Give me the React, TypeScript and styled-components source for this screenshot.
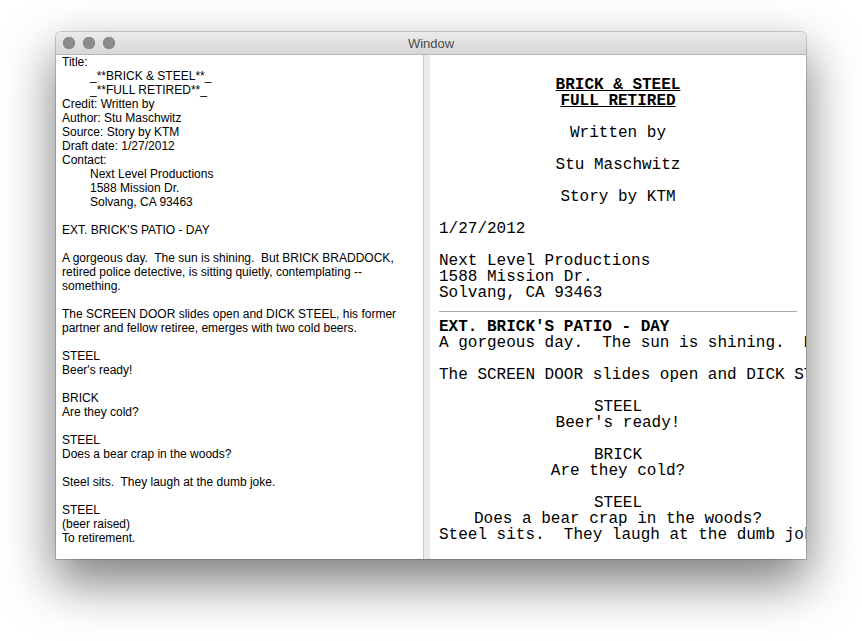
import React from "react";
import styled, { createGlobalStyle } from "styled-components";

const Global = createGlobalStyle`
  html, body { margin: 0; padding: 0; background: #ffffff; }
  body { width: 862px; height: 641px; overflow: hidden; }
`;

const Window = styled.div`
  margin: 32px 0 0 56px;
  width: 750px;
  height: 527px;
  border-radius: 5px 5px 0 0;
  background: #ffffff;
  box-shadow: 0 22px 50px 2px rgba(0, 0, 0, 0.5), 0 0 0 1px rgba(0, 0, 0, 0.18);
  display: flex;
  flex-direction: column;
  overflow: hidden;
`;

const TitleBar = styled.div`
  position: relative;
  height: 22px;
  flex: none;
  display: flex;
  align-items: center;
  justify-content: center;
  background: linear-gradient(#ebebeb, #d6d6d6);
  border-bottom: 1px solid #b6b6b6;
`;

const Lights = styled.div`
  position: absolute;
  left: 7px;
  top: 5px;
  display: flex;
  gap: 8px;
`;

const Light = styled.span`
  width: 12px;
  height: 12px;
  border-radius: 50%;
  background: #8c8c8c;
  box-shadow: inset 0 0 0 0.5px #7a7a7a;
`;

const Title = styled.div`
  font-family: "Liberation Sans", Arial, sans-serif;
  font-size: 13px;
  color: #4c4c4c;
`;

const Body = styled.div`
  flex: 1;
  display: flex;
  min-height: 0;
`;

const SourcePane = styled.div`
  width: 367px;
  flex: none;
  padding: 0 0 0 6px;
  box-sizing: border-box;
  overflow: hidden;
  font-family: "Liberation Sans", Arial, sans-serif;
  font-size: 12px;
  line-height: 14px;
  color: #000;
`;

const SrcLine = styled.div<{ $indent?: boolean }>`
  white-space: pre;
  height: 14px;
  padding-left: ${(p) => (p.$indent ? "28px" : "0")};
`;

const Divider = styled.div`
  width: 6px;
  flex: none;
  background: #ebebeb;
  border-left: 1px solid #c9c9c9;
`;

const PreviewPane = styled.div`
  flex: 1;
  min-width: 0;
  padding: 22px 9px 0 9px;
  overflow: hidden;
  font-family: "Liberation Mono", "Courier New", monospace;
  font-size: 16px;
  line-height: 16px;
  color: #000;
`;

const ScriptLine = styled.div<{ $center?: boolean; $bold?: boolean; $under?: boolean }>`
  white-space: pre;
  height: 16px;
  text-align: ${(p) => (p.$center ? "center" : "left")};
  font-weight: ${(p) => (p.$bold ? "bold" : "normal")};
  text-decoration: ${(p) => (p.$under ? "underline" : "none")};
`;

const Rule = styled.hr`
  border: none;
  border-top: 1px solid #a9a9a9;
  margin: 10px 0 7px 0;
  height: 0;
`;

type Src = { t: string; i?: boolean };
const source: Src[] = [
  { t: "Title:" },
  { t: "_**BRICK & STEEL**_", i: true },
  { t: "_**FULL RETIRED**_", i: true },
  { t: "Credit: Written by" },
  { t: "Author: Stu Maschwitz" },
  { t: "Source: Story by KTM" },
  { t: "Draft date: 1/27/2012" },
  { t: "Contact:" },
  { t: "Next Level Productions", i: true },
  { t: "1588 Mission Dr.", i: true },
  { t: "Solvang, CA 93463", i: true },
  { t: "" },
  { t: "EXT. BRICK'S PATIO - DAY" },
  { t: "" },
  { t: "A gorgeous day.  The sun is shining.  But BRICK BRADDOCK," },
  { t: "retired police detective, is sitting quietly, contemplating --" },
  { t: "something." },
  { t: "" },
  { t: "The SCREEN DOOR slides open and DICK STEEL, his former" },
  { t: "partner and fellow retiree, emerges with two cold beers." },
  { t: "" },
  { t: "STEEL" },
  { t: "Beer's ready!" },
  { t: "" },
  { t: "BRICK" },
  { t: "Are they cold?" },
  { t: "" },
  { t: "STEEL" },
  { t: "Does a bear crap in the woods?" },
  { t: "" },
  { t: "Steel sits.  They laugh at the dumb joke." },
  { t: "" },
  { t: "STEEL" },
  { t: "(beer raised)" },
  { t: "To retirement." },
];

type Sl = { t: string; c?: boolean; b?: boolean; u?: boolean };
const titlePage: Sl[] = [
  { t: "BRICK & STEEL", c: true, b: true, u: true },
  { t: "FULL RETIRED", c: true, b: true, u: true },
  { t: "" },
  { t: "Written by", c: true },
  { t: "" },
  { t: "Stu Maschwitz", c: true },
  { t: "" },
  { t: "Story by KTM", c: true },
  { t: "" },
  { t: "1/27/2012" },
  { t: "" },
  { t: "Next Level Productions" },
  { t: "1588 Mission Dr." },
  { t: "Solvang, CA 93463" },
];

const script: Sl[] = [
  { t: "EXT. BRICK'S PATIO - DAY", b: true },
  { t: "A gorgeous day.  The sun is shining.  But BRICK BRADDOCK, retired police detective, is sitting quietly, contemplating -- something." },
  { t: "" },
  { t: "The SCREEN DOOR slides open and DICK STEEL, his former partner and fellow retiree, emerges with two cold beers." },
  { t: "" },
  { t: "STEEL", c: true },
  { t: "Beer's ready!", c: true },
  { t: "" },
  { t: "BRICK", c: true },
  { t: "Are they cold?", c: true },
  { t: "" },
  { t: "STEEL", c: true },
  { t: "Does a bear crap in the woods?", c: true },
  { t: "Steel sits.  They laugh at the dumb joke." },
  { t: "" },
  { t: "STEEL", c: true },
  { t: "(beer raised)", c: true },
  { t: "To retirement.", c: true },
];

const renderLines = (lines: Sl[]) =>
  lines.map((l, i) => (
    <ScriptLine key={i} $center={l.c} $bold={l.b} $under={l.u}>
      {l.t}
    </ScriptLine>
  ));

export default function App() {
  return (
    <>
      <Global />
      <Window>
        <TitleBar>
          <Lights>
            <Light />
            <Light />
            <Light />
          </Lights>
          <Title>Window</Title>
        </TitleBar>
        <Body>
          <SourcePane>
            {source.map((l, i) => (
              <SrcLine key={i} $indent={l.i}>
                {l.t}
              </SrcLine>
            ))}
          </SourcePane>
          <Divider />
          <PreviewPane>
            {renderLines(titlePage)}
            <Rule />
            {renderLines(script)}
          </PreviewPane>
        </Body>
      </Window>
    </>
  );
}
